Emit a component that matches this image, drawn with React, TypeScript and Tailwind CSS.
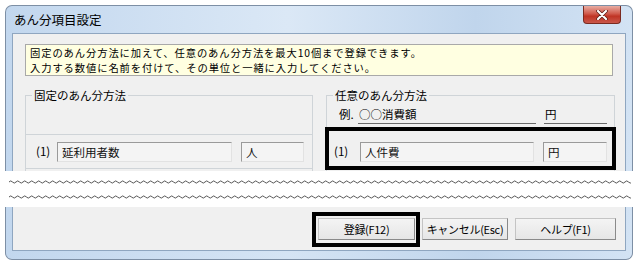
import React from 'react';

const wave = (y: number, w: number) => {
  let d = `M0,${y}`;
  for (let i = 0; i < w / 7; i++) d += ' q1.75,-2.2 3.5,0 q1.75,2.2 3.5,0';
  return d;
};

function Field({ text, w }: { text: string; w: string }) {
  return (
    <div
      className={`${w} h-[20px] border border-[#e2e2e2] border-t-[#9a9a9a] border-l-[#9a9a9a] bg-[#f4f4f4] pl-[4px] leading-[18px] text-[#111]`}
    >
      {text}
    </div>
  );
}

export default function App() {
  return (
    <div className="w-[642px] h-[274px] bg-white pt-[5px] font-['Noto_Sans_CJK_JP',sans-serif] text-[12px] text-black overflow-hidden">
      {/* 上半分 */}
      <div className="ml-[5px] w-[628px] h-[166px] overflow-hidden rounded-t-[7px] border border-b-0 border-[#7d8fa5] bg-[linear-gradient(90deg,#c2d7ee,#dbe8f6_45%,#c0d5ec_75%,#d3e3f4)] px-[6px] flex flex-col">
        <div className="h-[27px] shrink-0 flex items-start justify-between">
          <span className="pl-[2px] pt-[6px] leading-[16px] text-[12.5px]">あん分項目設定</span>
          <div className="mr-[5px] w-[38px] h-[18px] rounded-b-[4px] border border-t-0 border-[#7a2a20] bg-[linear-gradient(180deg,#e8aca2,#d05a4c_45%,#bf3425_60%,#c9574a)] flex items-center justify-center">
            <svg width="12" height="10" viewBox="0 0 12 10">
              <path d="M2,1 L10,9 M10,1 L2,9" stroke="#5a1a14" strokeWidth="3.6" strokeLinecap="round" />
              <path d="M2,1 L10,9 M10,1 L2,9" stroke="#fff" strokeWidth="2.2" strokeLinecap="round" />
            </svg>
          </div>
        </div>
        <div className="flex-1 border border-[#8fa6c0] bg-[#f0f0f0]">
          <div className="ml-[12px] mt-[10px] w-[588px] h-[32px] border border-[#a9a9a9] bg-[#ffffe1] pl-[4px] text-[10.3px] tracking-[0.9px]">
            <p className="leading-[15px] h-[15px]">固定のあん分方法に加えて、任意のあん分方法を最大10個まで登録できます。</p>
            <p className="leading-[15px] h-[15px]">入力する数値に名前を付けて、その単位と一緒に入力してください。</p>
          </div>

          <div className="ml-[12px] mt-[19px] flex gap-[13px] text-[11.5px]">
            {/* 固定 */}
            <div className="relative w-[288px] h-[100px] border border-[#cfd4d8]">
              <span className="absolute -top-[9px] left-[6px] bg-[#f0f0f0] px-[2px] leading-[16px]">固定のあん分方法</span>
              <div className="h-[39px] border-b border-[#cfd4d8]" />
              <div className="mt-[7px] flex items-center h-[20px] pl-[10px]">
                <span className="w-[21px]">(1)</span>
                <Field text="延利用者数" w="w-[175px]" />
                <div className="ml-[9px]">
                  <Field text="人" w="w-[63px]" />
                </div>
              </div>
              <div className="mt-[6px] border-t border-[#cfd4d8]" />
            </div>

            {/* 任意 */}
            <div className="relative w-[289px] h-[100px] border border-[#cfd4d8]">
              <span className="absolute -top-[9px] left-[6px] bg-[#f0f0f0] px-[2px] leading-[16px]">任意のあん分方法</span>
              <div className="mt-[9px] flex items-end pl-[12px] h-[19px]">
                <span className="w-[19px] leading-[19px]">例.</span>
                <span className="w-[178px] h-[19px] border-b border-[#6a6a6a] leading-[19px] pl-[1px]">○○消費額</span>
                <span className="ml-[8px] w-[63px] h-[19px] border-b border-[#6a6a6a] leading-[19px] pl-[1px]">円</span>
              </div>
              <div className="mt-[18px] flex items-center h-[20px] pl-[7px]">
                <span className="w-[26px]">(1)</span>
                <Field text="人件費" w="w-[174px]" />
                <div className="ml-[9px]">
                  <Field text="円" w="w-[64px]" />
                </div>
              </div>
              <div className="absolute left-[-2px] top-[31px] w-[291px] h-[43px] border-4 border-black" />
            </div>
          </div>
        </div>
      </div>

      {/* 省略 */}
      <div className="h-[36px] pl-[9px]">
        <svg width="622" height="36" viewBox="0 0 622 36">
          <path d={wave(11, 622)} fill="none" stroke="#555" strokeWidth="1" />
          <path d={wave(26, 622)} fill="none" stroke="#555" strokeWidth="1" />
        </svg>
      </div>

      {/* 下半分 */}
      <div className="relative ml-[5px] w-[628px] h-[53px] rounded-b-[7px] border border-t-0 border-[#7d8fa5] bg-[linear-gradient(90deg,#c2d7ee,#d5e4f4_45%,#c0d5ec_75%,#d3e3f4)] px-[6px] pb-[8px]">
        <div className="h-[44px] border border-t-0 border-[#8fa6c0] bg-[#f0f0f0] flex justify-end items-start pt-[11px] pr-[9px] gap-[7px] text-[11px] tracking-[-0.3px]">
          {[
            ['登録(F12)', 'w-[97px]'],
            ['キャンセル(Esc)', 'w-[86px]'],
            ['ヘルプ(F1)', 'w-[101px]'],
          ].map(([label, w]) => (
            <div
              key={label}
              className={`${w} h-[22px] border border-[#c4c4c4] border-r-[#8a8a8a] border-b-[#8a8a8a] bg-[linear-gradient(180deg,#f4f4f4,#e6e6e6)] flex items-center justify-center leading-[20px] whitespace-nowrap`}
            >
              {label}
            </div>
          ))}
        </div>
        <div className="absolute left-[306px] top-[5px] w-[108px] h-[35px] border-4 border-black" />
      </div>
    </div>
  );
}
